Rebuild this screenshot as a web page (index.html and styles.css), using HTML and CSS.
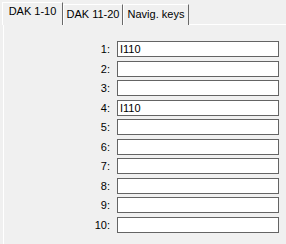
FILE: index.html
```html
<!DOCTYPE html>
<html lang="en">
<head>
  <meta charset="UTF-8" />
  <title>DAK settings</title>
  <link rel="stylesheet" href="styles.css">
</head>
<body>
  <!-- Tab strip -->
  <div class="tabs">
    <div class="tab active">DAK 1-10</div>
    <div class="tab tab-2">DAK 11-20</div>
    <div class="tab tab-3">Navig. keys</div>
    <div class="tab-fill"></div>
  </div>

  <!-- DAK 1-10 page -->
  <div class="panel">
    <div class="row"><label>1:</label><input type="text" value="I110" /></div>
    <div class="row"><label>2:</label><input type="text" /></div>
    <div class="row"><label>3:</label><input type="text" /></div>
    <div class="row"><label>4:</label><input type="text" value="I110" /></div>
    <div class="row"><label>5:</label><input type="text" /></div>
    <div class="row"><label>6:</label><input type="text" /></div>
    <div class="row"><label>7:</label><input type="text" /></div>
    <div class="row"><label>8:</label><input type="text" /></div>
    <div class="row"><label>9:</label><input type="text" /></div>
    <div class="row"><label>10:</label><input type="text" /></div>
  </div>
</body>
</html>
```

FILE: styles.css
```css
body {
    margin: 0;
    padding: 0;
    background-color: #f0f0f0;
    font-family: "Liberation Sans", Arial, sans-serif;
    font-size: 11px;
    color: #000;
    overflow: hidden;
}

/* Tabs */
.tabs {
    display: flex;
    align-items: flex-end;
    height: 25px;
    padding-left: 2px;
}

.tab {
    box-sizing: border-box;
    height: 21px;
    border-top: 1px solid #fff;
    border-left: 1px solid #fff;
    border-right: 1px solid #696969;
    line-height: 18px;
    text-align: center;
    white-space: nowrap;
}

.tab.active {
    width: 61px;
    height: 23px;
    line-height: 17px;
}

.tab-2 {
    width: 60px;
}

.tab-3 {
    width: 66px;
}

.tab-fill {
    flex-grow: 1;
    height: 0;
    border-bottom: 1px solid #fff;
}

/* Page */
.panel {
    box-sizing: border-box;
    margin-left: 3px;
    border-left: 1px solid #fff;
    height: 219px;
    padding-top: 16px;
}

.row {
    display: flex;
    align-items: center;
    height: 16px;
    margin-bottom: 3.56px;
}

.row label {
    width: 106px;
    margin-right: 7px;
    text-align: right;
}

.row input {
    box-sizing: border-box;
    width: 162px;
    height: 16px;
    margin: 0;
    padding: 0 2px;
    border: 1px solid #646464;
    border-radius: 0;
    background: #fff;
    font-family: "Liberation Sans", Arial, sans-serif;
    font-size: 11px;
    color: #000;
    outline: none;
}
```
